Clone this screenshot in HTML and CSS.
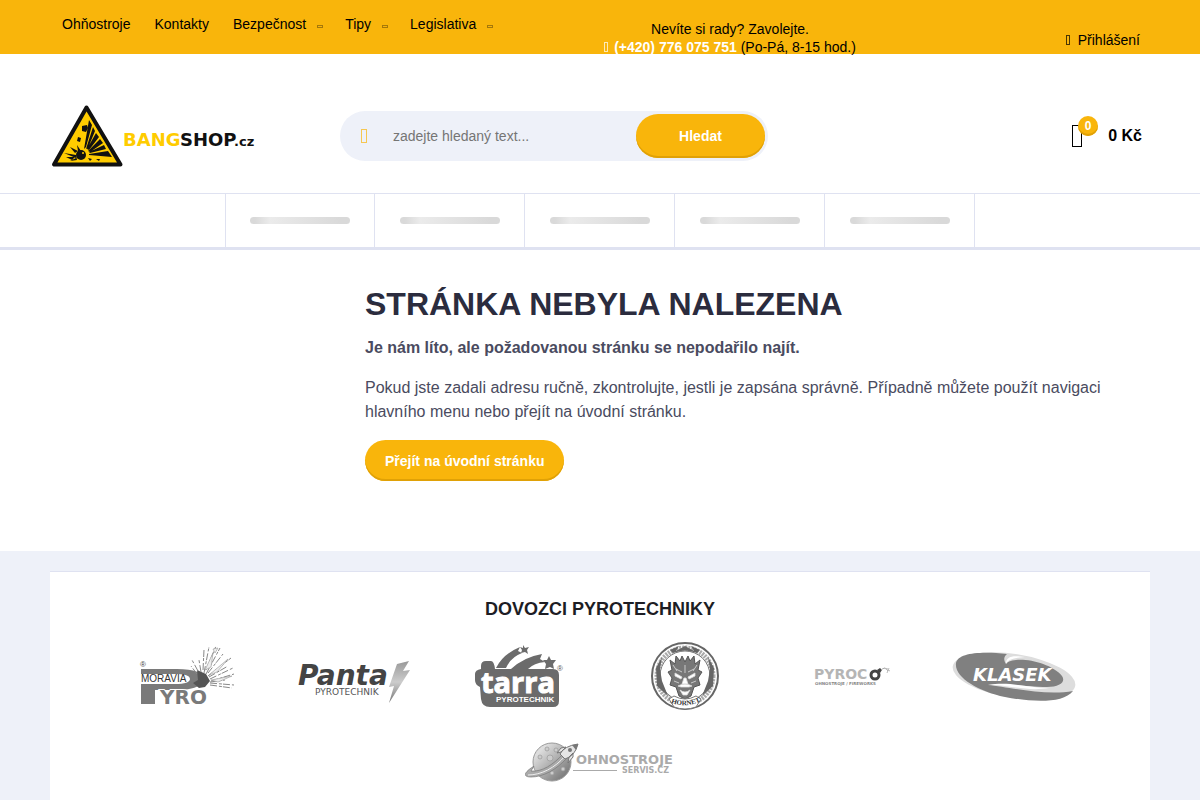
FILE: index.html
```
<!DOCTYPE html>
<html lang="cs">
<head>
    <meta charset="UTF-8" />
    <title>Stránka nebyla nalezena | BANGSHOP.cz</title>
    <meta name="viewport" content="width=device-width, initial-scale=1" />
    <link rel="stylesheet" href="styles.css">
</head>
<body>
    <div class="topbar">
        <div class="container topbar-inner">
            <nav class="topnav">
                <a href="#">Ohňostroje</a>
                <a href="#">Kontakty</a>
                <a href="#">Bezpečnost<span class="caret"></span></a>
                <a href="#">Tipy<span class="caret"></span></a>
                <a href="#">Legislativa<span class="caret"></span></a>
            </nav>
            <div class="contact">
                Nevíte si rady? Zavolejte.<br />
                <a href="tel:+420776075751"><span class="glyph"></span>(+420) 776 075 751</a> (Po-Pá, 8-15 hod.)
            </div>
            <a class="login" href="#"><span class="glyph"></span>Přihlášení</a>
        </div>
    </div>

    <header class="container header">
        <a class="logo" href="#" aria-label="BANGSHOP.cz">
            <svg width="206" height="66" viewBox="0 0 206 66">
                <path d="M36.5 4.500L4 61.500H70.500Z" fill="#fc0" stroke="#111" stroke-width="4" stroke-linejoin="round" />
                <g fill="#111">
                    <circle cx="31" cy="52" r="5" />
                    <path d="M14 50L26 52L27 57L20 58L26 55ZM20 44L28 48L25 50ZM27 42L31 48L28 48ZM16 54L25 54L22 57Z" />
                    <path d="M32 23l5-1 1 3-2 4-4-1zM28 34l3 1-1 4-3-1z" />
                    <path d="M34 46L39 17L42 22L36 44ZM36 46L43 24L45 28L38 45ZM37 46L46 30L49 34L39 47Z" />
                    <path d="M38 48L50 36L53 40L40 49ZM39 49L54 42L56 46L40 50ZM39 51L58 48L62 54L39 52Z" />
                    <path d="M46 56l4 0-1 2zM38 55l4 1-2 2z" />
                </g>
                <circle cx="33" cy="50" r="1" fill="#fc0" />
                <text class="logo-word" x="73" y="43" fill="#fc0">BANG</text>
                <text class="logo-word" x="130" y="43" fill="#111">SHOP</text>
                <text class="logo-tld" x="184" y="43" fill="#111">.cz</text>
            </svg>
        </a>
        <form class="search">
            <span class="glyph"></span>
            <input type="text" name="q" aria-label="Hledat" placeholder="zadejte hledaný text..." autocomplete="off" />
            <button class="btn" type="button">Hledat</button>
        </form>
        <a class="cart" href="#">
            <span class="cart-icon"><span class="badge">0</span></span>
            0 Kč
        </a>
    </header>

    <div class="menu">
        <div class="menu-item"><span></span></div>
        <div class="menu-item"><span></span></div>
        <div class="menu-item"><span></span></div>
        <div class="menu-item"><span></span></div>
        <div class="menu-item"><span></span></div>
    </div>

    <main class="container content">
        <h1>STRÁNKA NEBYLA NALEZENA</h1>
        <p><strong>Je nám líto, ale požadovanou stránku se nepodařilo najít.</strong></p>
        <p>Pokud jste zadali adresu ručně, zkontrolujte, jestli je zapsána správně. Případně můžete použít navigaci hlavního menu nebo přejít na úvodní stránku.</p>
        <a class="btn home" href="#">Přejít na úvodní stránku</a>
    </main>

    <footer class="footer">
        <div class="container brands">
            <h2>DOVOZCI PYROTECHNIKY</h2>
            <div class="brand-list">
                <!-- Moravia Pyro -->
                <a href="#" aria-label="Moravia Pyro">
                    <svg width="150" height="70" viewBox="0 0 150 70">
                        <path d="M28 28H64C81 28 91 32 91 37C91 45 79 49 65 49H42V63H28V43H62C72 43 77 41 77 38C77 34 70 33 62 33H28Z" fill="#7a7a7a" />
                        <text class="f-wide" x="47" y="63" font-size="20" fill="#7a7a7a" stroke="#fff" stroke-width="2" paint-order="stroke">YRO</text>
                        <text class="f-sans" x="28" y="41" font-size="10" fill="#333">MORAVIA</text>
                        <text class="f-sans" x="27" y="26" font-size="8" fill="#444">®</text>
                        <path d="M84 29L93 33L97 40L92 46L86 47L80 42L85 39Z" fill="#555" />
                        <path d="M88 31L86 19M90 29L91 9M91 32L96 6M93 29L103 5M93 33L107 7M95 32L110 13M95 35L118 17M96 36L115 25M97 38L120 27M98 40L121 33M97 42L121 44M97 44L119 47M97 41L112 39M85 30L79 19M84 33L78 25" fill="none" stroke="#888" stroke-width="1" stroke-dasharray="7 2 3 1" />
                        <path d="M92 29L100 12L98 26ZM96 34L115 18L104 31ZM98 39L119 35L105 41ZM100 8l5-1-3 5z" fill="#eee" stroke="#999" stroke-width=".6" />
                    </svg>
                </a>
                <!-- Panta -->
                <a href="#" aria-label="Panta Pyrotechnik">
                    <svg width="150" height="70" viewBox="0 0 150 70">
                        <defs>
                            <linearGradient id="bolt" x1="0" y1="0" x2="0" y2="1">
                                <stop offset="0" stop-color="#999" />
                                <stop offset=".5" stop-color="#ccc" />
                                <stop offset="1" stop-color="#777" />
                            </linearGradient>
                        </defs>
                        <text class="f-wide-i" x="20" y="44" font-size="28" fill="#444">Panta</text>
                        <text class="f-dejavu" x="37" y="54" font-size="9" fill="#555">PYROTECHNIK</text>
                        <path d="M119 23L131 20L125 30L132 29L111 62L116 45L111 46Z" fill="url(#bolt)" />
                    </svg>
                </a>
                <!-- Tarra -->
                <a href="#" aria-label="Tarra Pyrotechnik">
                    <svg width="150" height="70" viewBox="0 0 150 70">
                        <path d="M38 25Q38 20 43 20H48Q51 20 52 28H110Q116 28 116 34V60Q116 66 110 66H47Q39 66 38 58L37 46Q32 44 32 39V33Q32 29 38 28Z" fill="#6b6b6b" />
                        <path d="M53 27Q60 13 77 6L75 10L79 12Q68 16 63 27ZM68 28Q81 16 99 13L97 18L102 21Q91 22 85 28Z" fill="#6b6b6b" />
                        <path d="M80 4l2 3 4-1-2 3 1 4-3-2-4 1 1-3-2-3 3 1zM106 15l2 4 5 0-3 4 1 5-4-2-5 2 1-5-3-4 4 0z" fill="#6b6b6b" />
                        <text class="f-open" x="38" y="52" font-size="29" fill="#fff" stroke="#fff" stroke-width="1">tarra</text>
                        <text class="f-sans-b" x="53" y="61" font-size="8" fill="#fff">PYROTECHNIK</text>
                        <text class="f-sans" x="114" y="30" font-size="8" fill="#555">®</text>
                    </svg>
                </a>
                <!-- Hornet -->
                <a href="#" aria-label="Hornet">
                    <svg width="150" height="70" viewBox="0 0 150 70">
                        <circle cx="77" cy="35" r="33" fill="#fff" stroke="#666" stroke-width="2" />
                        <circle cx="77" cy="35" r="28" fill="none" stroke="#aaa" stroke-width="5" stroke-dasharray="2 1" />
                        <circle cx="77" cy="35" r="25" fill="#fff" stroke="#777" />
                        <path d="M62 9L71 5L68 10L77 5L86 10L83 5L92 9L89 12Q77 7 65 12ZM48 27L54 16L52 28L54 40L60 55L49 45ZM106 27L100 16L102 28L100 40L94 55L105 45Z" fill="#666" />
                        <path d="M64 29L62 19L67 23L68 15L72 20L74 15L77 21L80 15L82 20L86 15L87 23L92 19L90 29L94 31L90 37L92 44L86 46L83 55L77 58L71 55L68 46L62 44L64 37L60 31Z" fill="#777" stroke="#555" />
                        <path d="M67 32L74 36L73 38L67 35ZM87 32L80 36L81 38L87 35ZM76 37h2l2 6h-6zM70 45Q77 41 84 45L81 46H73ZM72 49Q77 53 82 49L79 54H75ZM68 28L74 31M86 28L80 31M77 24V32M65 24L69 30M89 24L85 30M66 40L71 42M88 40L83 42" fill="#fff" stroke="#ddd" stroke-width=".8" />
                        <path d="M61 58L66 55Q77 61 88 55L93 58L88 66Q77 70 66 66Z" fill="#fff" stroke="#777" />
                        <path id="ribbon" d="M63 62Q77 67 91 61" fill="none" />
                        <text class="f-serif" font-size="7" fill="#333"><textPath href="#ribbon">HORNET</textPath></text>
                    </svg>
                </a>
                <!-- Pyroco -->
                <a href="#" aria-label="Pyroco">
                    <svg width="150" height="70" viewBox="0 0 150 70">
                        <text class="f-wide" x="41" y="38" font-size="14" fill="#b5b5b5">PYROC</text>
                        <circle cx="102" cy="34" r="4" fill="none" stroke="#444" stroke-width="3" />
                        <path d="M104 29l3-2 2 2-2 3z" fill="#444" />
                        <path d="M108 29Q112 25 115 30" fill="none" stroke="#aaa" />
                        <path d="M111 27l4 1M114 32l2-5M115 29l2 1" stroke="#bbb" stroke-width="1" />
                        <text class="f-wide" x="42" y="44" font-size="4" fill="#888">OHNOSTROJE / FIREWORKS</text>
                    </svg>
                </a>
                <!-- Klasek -->
                <a href="#" aria-label="Klasek">
                    <svg width="150" height="70" viewBox="0 0 150 70">
                        <ellipse cx="76" cy="35" rx="62" ry="22" transform="rotate(9 76 35)" fill="#ddd" />
                        <path d="M18 22C20 12 42 10 69 13C65 16 66 20 68 23C75 14 112 20 124 35C128 41 122 46 109 46C94 47 65 41 50 44C70 46 107 55 135 50C125 63 93 61 67 56C40 50 16 36 18 22Z" fill="#808080" />
                        <path d="M68 23C68 16 73 14 87 16C74 17 70 19 68 23Z" fill="#fff" />
                        <path d="M50 44C72 40 89 47 111 47C87 51 69 43 50 44Z" fill="#fff" />
                        <text class="f-wide-i" x="35" y="40" font-size="18" fill="#fff">KLASEK</text>
                    </svg>
                </a>
                <!-- Ohnostroje servis -->
                <a href="#" aria-label="Ohnostroje servis.cz">
                    <svg width="150" height="70" viewBox="0 0 150 70">
                        <defs>
                            <linearGradient id="planet" x1="0" y1="0" x2="1" y2="1">
                                <stop offset=".2" stop-color="#ddd" />
                                <stop offset="1" stop-color="#666" />
                            </linearGradient>
                        </defs>
                        <circle cx="27" cy="36" r="19" fill="url(#planet)" stroke="#999" />
                        <g fill="#ccc" stroke="#999" stroke-width=".7">
                            <circle cx="22" cy="23" r="2" />
                            <circle cx="15" cy="31" r="2" />
                            <circle cx="25" cy="32" r="3" />
                            <circle cx="31" cy="24" r="2" />
                            <circle cx="27" cy="47" r="2" />
                            <circle cx="38" cy="43" r="2" />
                        </g>
                        <path d="M9 40C-2 47-2 51 6 51C18 51 31 44 42 32L38 28C28 39 17 46 6 45Z" fill="#aaa" stroke="#777" stroke-width=".7" />
                        <path d="M3 49C16 49 30 42 40 30" fill="none" stroke="#eee" />
                        <path d="M35 28Q39 20 53 18Q50 30 40 33ZM36 26L32 27L36 22L41 21ZM44 31L43 37L48 31L48 27Z" fill="#e5e5e5" stroke="#777" />
                        <path d="M47 19L53 18L51 24Z" fill="#777" />
                        <circle cx="45" cy="24" r="2" fill="#777" />
                        <text class="f-wide" x="51" y="38" font-size="13" fill="#aaa">OHNOSTROJE</text>
                        <path d="M48 44.500H92" stroke="#aaa" />
                        <text class="f-wide" x="97" y="47" font-size="8" fill="#aaa">SERVIS.CZ</text>
                    </svg>
                </a>
            </div>
        </div>
    </footer>
</body>
</html>
```

FILE: styles.css
```
* {
    box-sizing: border-box;
}
body {
    margin: 0;
    min-height: 100vh;
    display: flex;
    flex-direction: column;
    font-family: "Liberation Sans", Arial, sans-serif;
    font-size: 16px;
    line-height: 24px;
    color: #4a4b60;
    background: #fff;
}
a {
    text-decoration: none;
}
.container {
    width: 100%;
    max-width: 1100px;
    margin: 0 auto;
}

/* top bar */
.topbar {
    height: 54px;
    background: #f9b50b;
    font-size: 14px;
    line-height: 18px;
    color: #000;
}
.topbar-inner {
    display: grid;
    grid-template-columns: 1fr 260px 290px;
}
.topbar a {
    color: #000;
}
.topnav {
    display: flex;
    gap: 24px;
    padding: 15px 12px;
    white-space: nowrap;
}
.caret {
    display: inline-block;
    width: 6px;
    height: 3px;
    margin: 0 -2px 1px 11px;
    border: 1px solid #a5780a;
}
.contact {
    padding-top: 20px;
    text-align: center;
    white-space: nowrap;
}
.topbar .contact a {
    color: #fff;
    font-weight: bold;
}
.glyph {
    display: inline-block;
    width: 4px;
    height: 10px;
    margin-right: 6px;
    border: 1px solid currentColor;
    opacity: .7;
}
.login {
    justify-self: end;
    padding: 31px 10px 0 0;
}
.login .glyph {
    margin-right: 8px;
}

/* header */
.header {
    display: flex;
    align-items: center;
    height: 139px;
    padding-top: 24px;
}
.logo {
    display: flex;
    margin-right: 84px;
}
.logo-word {
    font: bold 18px "DejaVu Sans", sans-serif;
}
.logo-tld {
    font: bold 13px "DejaVu Sans", sans-serif;
}
.search {
    display: flex;
    align-items: center;
    width: 428px;
    height: 50px;
    padding: 0 3px 0 21px;
    border-radius: 25px;
    background: #eef1f9;
}
.search .glyph {
    width: 6px;
    height: 14px;
    margin-right: 26px;
    color: #f9b50b;
}
.search input {
    flex: 1;
    min-width: 0;
    padding: 0;
    border: 0;
    outline: 0;
    background: none;
    font: 14px "Liberation Sans", Arial, sans-serif;
}
.search input::placeholder {
    color: #757575;
}
.btn {
    border: 0;
    border-radius: 22px;
    background: #f9b50b;
    box-shadow: inset 0 -2px 0 #e0a106;
    color: #fff;
    font: bold 14px "Liberation Sans", Arial, sans-serif;
    cursor: pointer;
}
.search .btn {
    width: 129px;
    height: 44px;
}
.cart {
    display: flex;
    align-items: center;
    gap: 26px;
    margin-left: auto;
    padding-right: 8px;
    color: #000;
    font-weight: bold;
}
.cart-icon {
    position: relative;
    width: 10px;
    height: 22px;
    border: 1px solid #000;
}
.badge {
    position: absolute;
    left: 5px;
    top: -10px;
    width: 20px;
    height: 20px;
    border-radius: 50%;
    background: #f9b50b;
    box-shadow: inset 0 -2px 0 #e0a106;
    color: #fff;
    font-size: 12px;
    line-height: 20px;
    text-align: center;
}

/* menu placeholders */
.menu {
    display: flex;
    justify-content: center;
    height: 57px;
    border-top: 1px solid #dfe2f1;
    border-bottom: 3px solid #dfe2f1;
}
.menu-item {
    display: flex;
    align-items: center;
    justify-content: center;
    width: 150px;
    border-right: 1px solid #dfe2f1;
}
.menu-item:first-child {
    border-left: 1px solid #dfe2f1;
}
.menu-item span {
    width: 100px;
    height: 7px;
    border-radius: 4px;
    background: linear-gradient(to right, #d9d9d9 5%, #ebebeb 20%, #d9d9d9 90%);
}

/* content */
.content {
    padding: 34px 20px 70px 315px;
}
h1 {
    margin: 0 0 12px;
    font-size: 32px;
    line-height: 40px;
    color: #2b2c3e;
}
.content p {
    margin: 0 0 16px;
}
.home {
    display: inline-block;
    padding: 13px 20px 11px;
    line-height: 17px;
    vertical-align: top;
}

/* brands */
.footer {
    flex: 1;
    display: flex;
    padding-top: 20px;
    background: #eef1f9;
}
.brands {
    padding-top: 25px;
    border-top: 1px solid #dfe2f1;
    background: #fff;
}
h2 {
    margin: 0 0 20px;
    font-size: 18px;
    line-height: 24px;
    text-align: center;
    color: #1d1d24;
}
.brand-list {
    display: flex;
    flex-wrap: wrap;
    justify-content: center;
    gap: 15px;
}
.brand-list a {
    display: flex;
}
.f-sans {
    font-family: "Liberation Sans", sans-serif;
}
.f-sans-b {
    font-family: "Liberation Sans", sans-serif;
    font-weight: bold;
}
.f-serif {
    font-family: "Liberation Serif", serif;
    font-weight: bold;
}
.f-dejavu {
    font-family: "DejaVu Sans", sans-serif;
}
.f-wide {
    font-family: "DejaVu Sans", sans-serif;
    font-weight: bold;
}
.f-wide-i {
    font-family: "DejaVu Sans", sans-serif;
    font-weight: bold;
    font-style: italic;
}
.f-open {
    font-family: "Open Sans", sans-serif;
    font-weight: bold;
}
```
